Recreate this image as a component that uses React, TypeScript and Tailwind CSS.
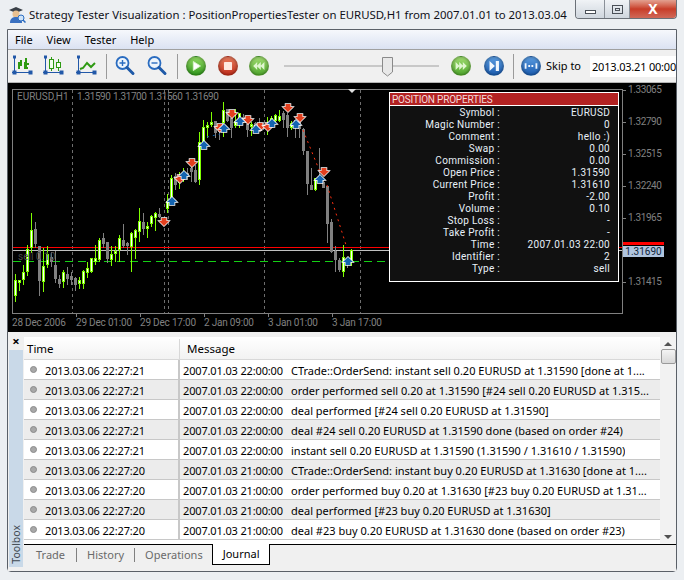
import type { ReactNode } from "react";

// x, wick top, body top, body bottom, wick bottom, up (x and y read at 3x, page origin x0 / y=85)
type Candle = [number, number, number, number, number, number];

const left: Candle[] = [
  [49, 568, 585, 632, 650, 1], [61, 585, 585, 593, 617, 1], [73, 540, 561, 585, 600, 1], [85, 480, 492, 560, 572, 1],
  [97, 385, 435, 490, 505, 1], [109, 412, 432, 476, 490, 0], [121, 484, 484, 587, 632, 0], [133, 490, 543, 592, 622, 1],
  [145, 484, 508, 540, 548, 1], [157, 500, 516, 530, 545, 0], [169, 497, 540, 581, 595, 0], [181, 570, 583, 597, 610, 0],
  [193, 555, 561, 592, 610, 1], [205, 545, 568, 582, 600, 0], [217, 560, 574, 584, 600, 0], [229, 575, 580, 599, 617, 0],
  [241, 575, 585, 596, 612, 1], [253, 555, 559, 596, 612, 1], [265, 530, 549, 563, 580, 1], [277, 518, 520, 560, 565, 1],
  [289, 480, 520, 530, 540, 1], [301, 460, 466, 525, 530, 1], [313, 445, 460, 476, 490, 0], [325, 470, 472, 522, 535, 0],
  [337, 484, 508, 525, 542, 1], [349, 484, 497, 507, 530, 1], [361, 450, 460, 496, 530, 1], [373, 417, 465, 484, 490, 0],
  [385, 470, 474, 483, 510, 0], [397, 440, 445, 486, 562, 1], [409, 432, 436, 458, 522, 1], [421, 370, 408, 442, 472, 1],
  [433, 385, 412, 433, 450, 0], [445, 412, 423, 431, 460, 1], [457, 390, 394, 416, 425, 1], [469, 380, 385, 398, 437, 1],
  [481, 370, 388, 396, 400, 0], [505, 327, 349, 372, 385, 1], [517, 270, 280, 345, 355, 1], [529, 265, 272, 300, 315, 0],
  [541, 260, 280, 295, 312, 1], [553, 250, 265, 280, 290, 1], [565, 250, 265, 275, 285, 0],
];

const right: Candle[] = [
  [7, 240, 250, 262, 292, 0], [19, 240, 255, 290, 295, 0], [31, 140, 172, 285, 300, 1], [43, 105, 127, 170, 180, 1],
  [55, 112, 120, 128, 158, 1], [67, 82, 112, 120, 125, 1], [79, 108, 108, 145, 160, 0], [91, 120, 125, 140, 165, 0],
  [103, 52, 76, 115, 155, 1], [115, 73, 73, 108, 110, 0], [127, 90, 100, 128, 160, 0], [139, 72, 108, 122, 128, 1],
  [151, 85, 85, 100, 130, 1], [163, 88, 95, 112, 115, 0], [175, 105, 118, 135, 155, 0], [187, 110, 118, 125, 152, 1],
  [199, 110, 115, 128, 140, 0], [211, 100, 115, 125, 130, 0], [223, 110, 118, 128, 135, 0], [235, 95, 118, 135, 150, 1],
  [247, 92, 100, 120, 130, 1], [259, 88, 90, 108, 112, 1], [271, 75, 92, 108, 110, 1], [283, 78, 85, 104, 130, 0],
  [295, 85, 90, 130, 155, 0], [307, 108, 115, 130, 135, 1], [319, 105, 105, 125, 160, 0], [331, 95, 100, 132, 160, 0],
  [343, 130, 133, 198, 210, 0], [355, 198, 198, 298, 330, 0], [367, 250, 300, 315, 315, 0], [379, 278, 280, 315, 318, 1],
  [391, 190, 275, 290, 295, 0], [403, 280, 290, 308, 310, 0], [415, 303, 303, 416, 475, 0], [427, 403, 412, 502, 505, 0],
  [439, 484, 497, 524, 560, 0], [451, 520, 525, 556, 560, 0], [463, 480, 517, 560, 575, 1], [475, 515, 520, 536, 548, 0],
  [487, 493, 495, 530, 542, 1],
];

const sells = [[164, 222], [180, 179], [192, 163], [232, 114], [248, 120], [220, 128], [260, 127], [268, 127], [288, 108], [300, 118], [324, 172]];
const buys = [[172, 201], [184, 175], [204, 145], [224, 128], [240, 121], [256, 129], [272, 123], [296, 124], [320, 179], [348, 261]];

const prices = [["1.33065", 93], ["1.32790", 125], ["1.32515", 157], ["1.32240", 189], ["1.31965", 221], ["1.31415", 285]] as const;
const dates = [["28 Dec 2006", 12], ["29 Dec 01:00", 76], ["29 Dec 17:00", 140], ["2 Jan 09:00", 204], ["3 Jan 01:00", 268], ["3 Jan 17:00", 332]] as const;
const ohlc = [["1.31590", 77], ["1.31700", 113], ["1.31560", 149], ["1.31690", 185]] as const;

const position = [
  ["Symbol :", "EURUSD"], ["Magic Number :", "0"], ["Comment :", "hello :)"], ["Swap :", "0.00"], ["Commission :", "0.00"],
  ["Open Price :", "1.31590"], ["Current Price :", "1.31610"], ["Profit :", "-2.00"], ["Volume :", "0.10"], ["Stop Loss :", "-"],
  ["Take Profit :", "-"], ["Time :", "2007.01.03 22:00"], ["Identifier :", "2"], ["Type :", "sell"],
];

const journal = [
  ["2013.03.06 22:27:21", "2007.01.03 22:00:00", "CTrade::OrderSend: instant sell 0.20 EURUSD at 1.31590 [done at 1...."],
  ["2013.03.06 22:27:21", "2007.01.03 22:00:00", "order performed sell 0.20 at 1.31590 [#24 sell 0.20 EURUSD at 1.315..."],
  ["2013.03.06 22:27:21", "2007.01.03 22:00:00", "deal performed [#24 sell 0.20 EURUSD at 1.31590]"],
  ["2013.03.06 22:27:21", "2007.01.03 22:00:00", "deal #24 sell 0.20 EURUSD at 1.31590 done (based on order #24)"],
  ["2013.03.06 22:27:21", "2007.01.03 22:00:00", "instant sell 0.20 EURUSD at 1.31590 (1.31590 / 1.31610 / 1.31590)"],
  ["2013.03.06 22:27:20", "2007.01.03 21:00:00", "CTrade::OrderSend: instant buy 0.20 EURUSD at 1.31630 [done at 1...."],
  ["2013.03.06 22:27:20", "2007.01.03 21:00:00", "order performed buy 0.20 at 1.31630 [#23 buy 0.20 EURUSD at 1.31..."],
  ["2013.03.06 22:27:20", "2007.01.03 21:00:00", "deal performed [#23 buy 0.20 EURUSD at 1.31630]"],
  ["2013.03.06 22:27:20", "2007.01.03 21:00:00", "deal #23 buy 0.20 EURUSD at 1.31630 done (based on order #23)"],
];

const greenDashes = Array.from({ length: 47 }, (_, i) => 13 + i * 13);

function CandleMark({ c, x0 }: { c: Candle; x0: number }) {
  const x = Math.round(x0 + c[0] / 3) - 1;
  const y = (v: number) => Math.round(85 + v / 3);
  const top = y(c[2]);
  const h = Math.max(y(c[3]) - top, 2);
  const edge = c[5] ? "#7fff00" : "#808080";
  return (
    <g>
      <rect x={x} y={y(c[1])} width={1} height={y(c[4]) - y(c[1])} fill={edge} />
      <rect x={x - 1} y={top} width={3} height={h} fill={edge} />
      {c[5] ? <rect x={x} y={top + 1} width={1} height={Math.max(h - 2, 1)} fill="#ffffff" /> : null}
    </g>
  );
}

function Arrow({ x, y, down }: { x: number; y: number; down?: boolean }) {
  return (
    <polygon
      transform={`translate(${x} ${y})${down ? "" : " rotate(180)"}`}
      points="-2.5,-4 2.5,-4 2.5,-1 5,-1 0,4 -5,-1 -2.5,-1"
      fill={down ? "#e2401f" : "#1464b0"}
      stroke="#ffffff"
      strokeWidth={1.5}
      paintOrder="stroke"
    />
  );
}

function Chart() {
  return (
    <svg viewBox="8 83 667 249" className="block h-[249px] w-[667px]" fontFamily="Roboto, sans-serif" fontSize="10">
      <g shapeRendering="crispEdges">
        <rect x={12} y={89} width={610} height={1} fill="#808080" />
        <rect x={12} y={313} width={611} height={1} fill="#808080" />
        <rect x={12} y={89} width={1} height={224} fill="#808080" />
        <rect x={622} y={89} width={1} height={224} fill="#808080" />
        {[72, 164, 168, 264, 360].map((x) => (
          <line key={x} x1={x + 0.5} x2={x + 0.5} y1={90} y2={313} stroke="#6e6e6e" strokeDasharray="3 3" />
        ))}
        {[76, 140, 204, 268, 332].map((x) => (
          <rect key={x} x={x} y={313} width={1} height={4} fill="#808080" />
        ))}
        {[90, 122, 154, 186, 218, 282].map((y) => (
          <rect key={y} x={622} y={y} width={4} height={1} fill="#808080" />
        ))}
        <rect x={13} y={247} width={609} height={1} fill="#ff0000" />
        <rect x={13} y={250} width={609} height={1} fill="#c0c0c0" />
        {greenDashes.map((x) => (
          <rect key={x} x={x} y={261} width={8} height={1} fill="#14d014" />
        ))}
        {left.map((c) => <CandleMark key={c[0]} c={c} x0={0} />)}
        {right.map((c) => <CandleMark key={c[0]} c={c} x0={190} />)}
      </g>
      <polygon points="348,89 356,89 352,93" fill="#e0e0e0" />
      <line x1={303} y1={130} x2={320} y2={172} stroke="#ff3010" strokeDasharray="2 4" />
      <line x1={327} y1={185} x2={347} y2={248} stroke="#ff3010" strokeDasharray="2 4" />
      <line x1={207} y1={137} x2={220} y2={134} stroke="#1464b0" strokeDasharray="2 4" />
      {sells.map(([x, y]) => <Arrow key={`s${x}`} x={x} y={y} down />)}
      {buys.map(([x, y]) => <Arrow key={`b${x}`} x={x} y={y} />)}
      <text x={17} y={100} fill="#808080">EURUSD,H1</text>
      {ohlc.map(([t, x]) => <text key={x} x={x} y={100} fill="#808080" letterSpacing="-0.4">{t}</text>)}
      <text x={18} y={260} fill="#4a4a4a">sell 0.10</text>
      {dates.map(([t, x]) => <text key={t} x={x} y={326} fill="#808080" letterSpacing="-0.2">{t}</text>)}
      {prices.map(([t, y]) => <text key={t} x={628} y={y} fill="#808080" letterSpacing="-0.4">{t}</text>)}
    </svg>
  );
}

function PositionPanel() {
  return (
    <div className="absolute left-[381px] top-[9px] h-[190px] w-[230px] border border-white bg-[#111111] font-['Roboto',sans-serif] text-[10px] leading-[12px] tracking-[0.3px] text-[#e8f0f8]">
      <div className="h-[13px] border-b border-white bg-[#b22222] pl-[2px] leading-[13px] tracking-[-0.2px] text-[#f4dcdc]">POSITION PROPERTIES</div>
      <div className="grid grid-cols-[110px_110px] pt-px">
        {position.map(([k, v]) => (
          <div key={k} className="contents">
            <span className="text-right">{k}</span>
            <span className="text-right">{v}</span>
          </div>
        ))}
      </div>
    </div>
  );
}

function ToolIcon({ children }: { children: ReactNode }) {
  return <svg viewBox="0 0 22 22" className="h-[22px] w-[22px] shrink-0">{children}</svg>;
}

function Axes() {
  return (
    <g fill="none" stroke="#2258a8" strokeWidth={1}>
      <path d="M2.5 1v17M0 17.5h19" />
      <rect x={1} y={16} width={3} height={3} fill="#2258a8" />
      <rect x={17} y={16} width={3} height={3} fill="#2258a8" />
      <rect x={1.5} y={1} width={2} height={2} fill="#2258a8" />
    </g>
  );
}

function Round({ from, to, children }: { from: string; to: string; children: ReactNode }) {
  return (
    <div className={`flex h-[20px] w-[20px] shrink-0 items-center justify-center rounded-full border border-black/20 bg-gradient-to-b shadow-[inset_0_0_3px_rgba(0,0,0,0.35)] ${from} ${to}`}>
      <svg viewBox="0 0 20 20" className="h-[20px] w-[20px]">{children}</svg>
    </div>
  );
}

function Lens({ plus }: { plus?: boolean }) {
  return (
    <ToolIcon>
      <circle cx={8.5} cy={8} r={6} fill="#eef5fc" stroke="#2a6cc0" strokeWidth={1.8} />
      <path d="M13 12.5l6 6" stroke="#1f5aa8" strokeWidth={3} strokeLinecap="round" />
      <path d={plus ? "M5.5 8h6M8.5 5v6" : "M5.5 8h6"} stroke="#2a6cc0" strokeWidth={1.4} />
    </ToolIcon>
  );
}

function Divider() {
  return <div className="h-[25px] w-px shrink-0 bg-[#9a9a9a]" />;
}

export default function App() {
  return (
    <div className="flex h-[580px] w-[684px] flex-col overflow-hidden bg-[#eceff2] font-['Noto_Sans',sans-serif] text-[11px] text-black">
      <div className="flex h-[29px] shrink-0 items-start">
        <svg viewBox="0 0 18 18" className="ml-[8px] mt-[6px] h-[18px] w-[18px] shrink-0">
          <path d="M1 4l7-3 7 3-7 3z" fill="#3a4048" />
          <circle cx={8} cy={8} r={3.5} fill="#e8c090" />
          <path d="M2 17c0-5 3-6 6-6s6 1 6 6z" fill="#3a70c0" />
          <circle cx={13} cy={12} r={3} fill="#cfe4f8" stroke="#2a6cc0" />
          <path d="M15 14l2.500 2.500" stroke="#2a6cc0" strokeWidth={1.500} />
        </svg>
        <span className="ml-[3px] mt-[5px] whitespace-nowrap text-[11.4px] leading-[20px] text-[#101018]">
          Strategy Tester Visualization : PositionPropertiesTester on EURUSD,H1 from 2007.01.01 to 2013.03.04
        </span>
        <div className="ml-auto mr-[7px] flex h-[19px] shrink-0 overflow-hidden rounded-b-[4px] border border-t-0 border-[#6a7078]">
          <div className="flex w-[29px] items-center justify-center border-r border-[#8a9098] bg-gradient-to-b from-[#f0f3f6] to-[#cfd6de]">
            <div className="mt-[5px] h-[4px] w-[11px] border border-[#4a5058] bg-white" />
          </div>
          <div className="flex w-[25px] items-center justify-center border-r border-[#8a9098] bg-gradient-to-b from-[#f0f3f6] to-[#cfd6de]">
            <div className="h-[9px] w-[11px] border border-[#4a5058] p-[2px]"><div className="h-full w-full border border-[#4a5058]" /></div>
          </div>
          <div className="flex w-[46px] items-center justify-center bg-gradient-to-b from-[#e2a090] via-[#c83c28] to-[#d06858] text-[14px] font-bold leading-none text-white">X</div>
        </div>
      </div>

      <div className="mx-[7px] flex h-[543px] w-[670px] shrink-0 flex-col rounded-b-[4px] border border-[#5a6068] bg-[#f0f0f0]">
        <div className="flex h-[20px] shrink-0 items-center gap-[14px] border-b border-[#a0a0a0] bg-gradient-to-b from-[#f6f8fc] to-[#dbe2f2] pl-[7px] pt-[2px] text-[11px]">
          <span>File</span>
          <span>View</span>
          <span>Tester</span>
          <span>Help</span>
        </div>

        <div className="flex h-[33px] shrink-0 items-center border-b border-[#b4b4b4] pl-[4px]">
          <ToolIcon>
            <Axes />
            <path d="M7 14V8h2V5M7 10h3M14 12V3M12 9h5M13 7v6h3" fill="none" stroke="#2e9a12" strokeWidth={2} />
          </ToolIcon>
          <div className="ml-[9px]">
            <ToolIcon>
              <Axes />
              <rect x={6.500} y={4.500} width={4} height={9} fill="#f4fff0" stroke="#2e9a12" />
              <path d="M8.500 2v2M8.500 14v2M15.500 4v3M15.500 13v3" stroke="#2e9a12" />
              <rect x={13.500} y={7.500} width={4} height={5} fill="#f4fff0" stroke="#2e9a12" />
            </ToolIcon>
          </div>
          <div className="ml-[11px]">
            <ToolIcon>
              <Axes />
              <path d="M4 14l3-1 4-5 4 4 4-4" fill="none" stroke="#2e9a12" strokeWidth={2} />
            </ToolIcon>
          </div>
          <div className="ml-[8px] mr-[7px]"><Divider /></div>
          <Lens plus />
          <div className="ml-[10px] mr-[8px]"><Lens /></div>
          <div className="ml-[1px]"><Divider /></div>
          <div className="ml-[8px]">
            <Round from="from-[#8fd860]" to="to-[#2f9a1c]"><path d="M7 5l8 5-8 5z" fill="#ffffff" stroke="#d8f4c8" /></Round>
          </div>
          <div className="ml-[12px]">
            <Round from="from-[#e87a5c]" to="to-[#c02a18]"><rect x={5.500} y={5.500} width={9} height={9} rx={1} fill="#ffe8e0" /></Round>
          </div>
          <div className="ml-[11px]">
            <Round from="from-[#a0dc70]" to="to-[#4fa82c]"><path d="M8 5.500v9L3.500 10zM12 5.500v9L7.500 10zM16 5.500v9L11.500 10z" fill="#e0f6d0" /></Round>
          </div>
          <div className="relative ml-[15px] h-[21px] w-[155px] shrink-0">
            <div className="absolute left-0 right-0 top-[9px] h-[2px] bg-[#c8c8c8]" />
            <svg viewBox="0 0 11 20" className="absolute left-[98px] top-[1px] h-[20px] w-[11px]">
              <path d="M.5.500h10V15l-5 4-5-4z" fill="#e8e8e8" stroke="#8a8a8a" />
            </svg>
          </div>
          <div className="ml-[12px]">
            <Round from="from-[#a0dc70]" to="to-[#4fa82c]"><path d="M4 5.500v9L8.500 10zM8 5.500v9l4.500-4.500zM12 5.500v9l4.500-4.500z" fill="#e0f6d0" /></Round>
          </div>
          <div className="ml-[13px]">
            <Round from="from-[#5a9ce0]" to="to-[#1a5cb0]"><path d="M5 4.500l6 5.500-6 5.500zM12 4.500h3.500v11H12z" fill="#f0f6fc" /></Round>
          </div>
          <div className="ml-[9px]"><Divider /></div>
          <div className="ml-[7px]">
            <Round from="from-[#5a9ce0]" to="to-[#1a5cb0]"><path d="M3 7h2v6H3zM15 7h2v6h-2zM7 9h2v2H7zM10.500 9h2v2h-2z" fill="#f0f6fc" /></Round>
          </div>
          <span className="ml-[5px] whitespace-nowrap text-[11px]">Skip to</span>
          <div className="ml-[9px] h-[21px] flex-1 overflow-hidden whitespace-nowrap bg-white pl-[2px] text-[11px] leading-[21px] tracking-[-0.2px]">2013.03.21 00:00</div>
        </div>

        <div className="relative h-[249px] shrink-0 bg-black">
          <Chart />
          <PositionPanel />
          <div className="absolute left-[615px] top-[159px] h-[3px] w-[41px] bg-[#ff0000]" />
          <div className="absolute left-[615px] top-[163px] h-[11px] w-[41px] bg-[#b0c4de] text-center font-['Roboto',sans-serif] text-[10px] leading-[11px] text-[#10243c]">1.31690</div>
        </div>

        <div className="flex min-h-0 flex-1 bg-[#f0f0f0]">
          <div className="flex w-[16px] shrink-0 flex-col items-center pb-[4px] pt-[3px]">
            <span className="h-[14px] text-[13px] font-bold leading-[12px]">×</span>
            <div className="mt-px flex w-[14px] flex-1 items-end justify-center bg-[#c9d9e8] pb-[3px]">
              <span className="whitespace-nowrap text-[10.5px] leading-[14px] text-[#404850] [writing-mode:vertical-rl] rotate-180">Toolbox</span>
            </div>
          </div>
          <div className="flex min-w-0 flex-1 flex-col pt-[5px]">
            <div className="flex h-[208px] shrink-0 border-b border-black bg-white">
              <div className="min-w-0 flex-1">
                <div className="flex h-[23px] items-center border-b border-[#d8d8d8] bg-gradient-to-b from-white to-[#f2f2f2] pt-[2px] text-[11.5px]">
                  <span className="w-[156px] border-r border-[#d8d8d8] pl-[3px] leading-[20px]">Time</span>
                  <span className="pl-[7px]">Message</span>
                </div>
                {journal.map((row, i) => (
                  <div key={i} className={`flex h-[20px] items-center whitespace-nowrap border-b border-[#c8c8c8] ${i % 2 ? "bg-[#ececec]" : "bg-white"}`}>
                    <div className="flex h-full w-[156px] shrink-0 items-center border-r-2 border-[#c8c8c8] pl-[6px]">
                      <span className="h-[7px] w-[7px] rounded-full border border-[#8a8a8a] bg-[#a8a8a8]" />
                      <span className="ml-[8px] pt-[3px] tracking-[-0.15px]">{row[0]}</span>
                    </div>
                    <span className="ml-[3px] w-[108px] shrink-0 pt-[3px] tracking-[-0.15px]">{row[1]}</span>
                    <span className="min-w-0 overflow-hidden pt-[3px]">{row[2]}</span>
                  </div>
                ))}
              </div>
              <div className="flex w-[16px] shrink-0 flex-col items-center bg-[#f2f2f2]">
                <span className="mt-[5px] h-0 w-0 border-x-[4px] border-b-[4px] border-x-transparent border-b-[#505050]" />
                <div className="mt-[3px] h-[15px] w-[15px] rounded-[2px] border border-[#9a9a9a] bg-gradient-to-b from-[#f4f4f4] to-[#d8d8d8]" />
                <span className="mb-[5px] mt-auto h-0 w-0 border-x-[4px] border-t-[4px] border-x-transparent border-t-[#505050]" />
              </div>
            </div>
            <div className="flex h-[20px] shrink-0 text-[11px] text-[#6a6a6a]">
              <span className="flex items-center pl-[12px] pr-[11px]">Trade</span>
              <span className="my-[3px] w-px bg-[#808080]" />
              <span className="flex items-center px-[10px]">History</span>
              <span className="my-[3px] w-px bg-[#808080]" />
              <span className="flex w-[77px] items-center pl-[10px]">Operations</span>
              <span className="-mt-px flex w-[58px] items-center justify-center border-x border-b border-black bg-white text-black">Journal</span>
            </div>
          </div>
        </div>
      </div>
    </div>
  );
}
